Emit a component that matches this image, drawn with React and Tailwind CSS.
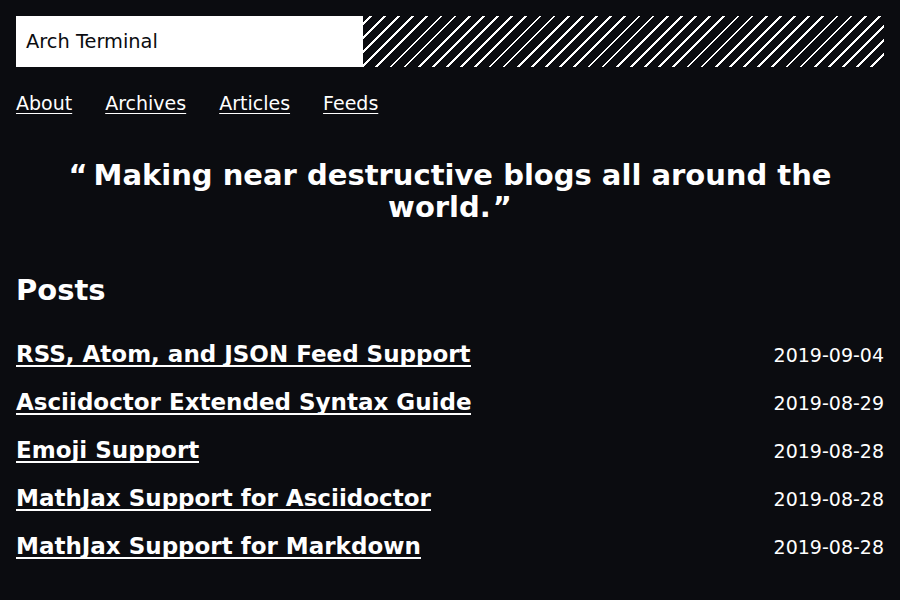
const posts = [
  { title: "RSS, Atom, and JSON Feed Support", date: "2019-09-04" },
  { title: "Asciidoctor Extended Syntax Guide", date: "2019-08-29" },
  { title: "Emoji Support", date: "2019-08-28" },
  { title: "MathJax Support for Asciidoctor", date: "2019-08-28" },
  { title: "MathJax Support for Markdown", date: "2019-08-28" },
];

const navLinks = ["About", "Archives", "Articles", "Feeds"];

export default function App() {
  return (
    <div className="min-h-[600px] bg-[#0b0c10] text-white p-4 font-['DejaVu_Sans',sans-serif]">
      {/* header */}
      <header className="flex h-[51px]">
        <div className="w-[347px] bg-white text-[#0b0c10] flex items-center pl-[10px] text-[19.4px]">
          Arch Terminal
        </div>
        <div className="flex-1 bg-[repeating-linear-gradient(-45deg,#0b0c10_0px,#0b0c10_8px,#ffffff_8px,#ffffff_10px)]" />
      </header>

      <nav className="flex gap-[33px] mt-[24px] text-[19px] leading-6">
        {navLinks.map((link) => (
          <a key={link} href="#" className="underline underline-offset-[3px]">
            {link}
          </a>
        ))}
      </nav>

      <blockquote className="mt-[44px] text-center text-[29px] font-bold leading-[32px] px-8">
        <span className="mr-[6px]">“</span>
        Making near destructive blogs all around the world.
        <span className="ml-[2px]">”</span>
      </blockquote>

      <h2 className="mt-[49px] text-[29px] font-bold leading-9">Posts</h2>

      <ul className="mt-[32px] flex flex-col gap-[18px]">
        {posts.map((post) => (
          <li key={post.title} className="flex justify-between items-center h-[30px]">
            <a href="#" className="text-[23px] font-bold leading-[22px] border-b-2 border-white">
              {post.title}
            </a>
            <span className="text-[19px]">{post.date}</span>
          </li>
        ))}
      </ul>
    </div>
  );
}
